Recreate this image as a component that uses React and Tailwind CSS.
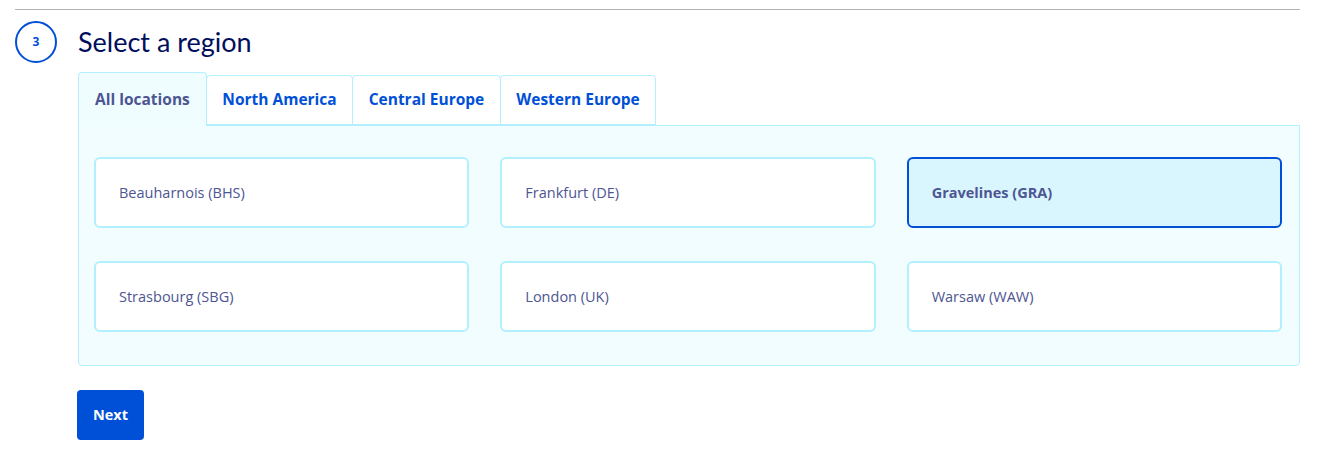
import React, { useState } from "react";

const tabs = ["All locations", "North America", "Central Europe", "Western Europe"];

const regions = [
  "Beauharnois (BHS)",
  "Frankfurt (DE)",
  "Gravelines (GRA)",
  "Strasbourg (SBG)",
  "London (UK)",
  "Warsaw (WAW)",
];

export default function App() {
  const [tab, setTab] = useState(0);
  const [selected, setSelected] = useState("Gravelines (GRA)");

  return (
    <div className="bg-white w-[1340px] h-[453px] pt-[9px] font-['Open_Sans',sans-serif]">
      <div className="mx-[15px] w-[1285px] border-t border-[#b3b3b3]" />
      <div className="flex items-center mt-[11px] ml-[15px]">
        <div className="w-[42px] h-[42px] rounded-full border-2 border-[#0050d7] flex items-center justify-center text-[12px] font-bold text-[#0050d7]">
          3
        </div>
        <h2 className="ml-[21px] text-[27px] leading-[32px] text-[#000e5c] font-['Lato',sans-serif]">Select a region</h2>
      </div>

      <div className="ml-[78px] mt-[9px] w-[1222px]">
        <div className="flex items-end h-[53px]">
          {tabs.map((t, i) =>
            i === tab ? (
              <button
                key={t}
                onClick={() => setTab(i)}
                className="h-[54px] -mb-px relative z-10 px-[16px] bg-[#f0fdff] border border-b-0 border-[#b3f0ff] rounded-t-[4px] text-[15.5px] font-bold text-[#4d5592] whitespace-nowrap"
              >
                {t}
              </button>
            ) : (
              <button
                key={t}
                onClick={() => setTab(i)}
                className="h-[50px] px-[15.5px] bg-white border border-[#b3f0ff] -ml-px first:ml-0 rounded-t-[4px] text-[15.5px] font-bold text-[#0050d7] whitespace-nowrap"
              >
                {t}
              </button>
            )
          )}
        </div>
        <div className="bg-[#f2fdff] border border-[#b3f0ff] rounded-b-[4px] pt-[31px] pb-[33px] pl-[15px] pr-[17px] grid grid-cols-3 gap-x-[31px] gap-y-[33px]">
          {regions.map((r) => {
            const on = r === selected;
            return (
              <button
                key={r}
                onClick={() => setSelected(r)}
                className={
                  on
                    ? "h-[71px] rounded-[6px] border-2 border-[#0050d7] bg-[#d9f6ff] text-left pl-[23px] text-[14.5px] font-bold text-[#4d5592]"
                    : "h-[71px] rounded-[6px] border-2 border-[#b3f0ff] bg-white text-left pl-[23px] text-[14.5px] text-[#4d5592]"
                }
              >
                {r}
              </button>
            );
          })}
        </div>
        <button className="mt-[24px] -ml-px h-[50px] px-[16px] bg-[#0050d7] rounded-[4px] text-white text-[14.5px] font-bold">
          Next
        </button>
      </div>
    </div>
  );
}
